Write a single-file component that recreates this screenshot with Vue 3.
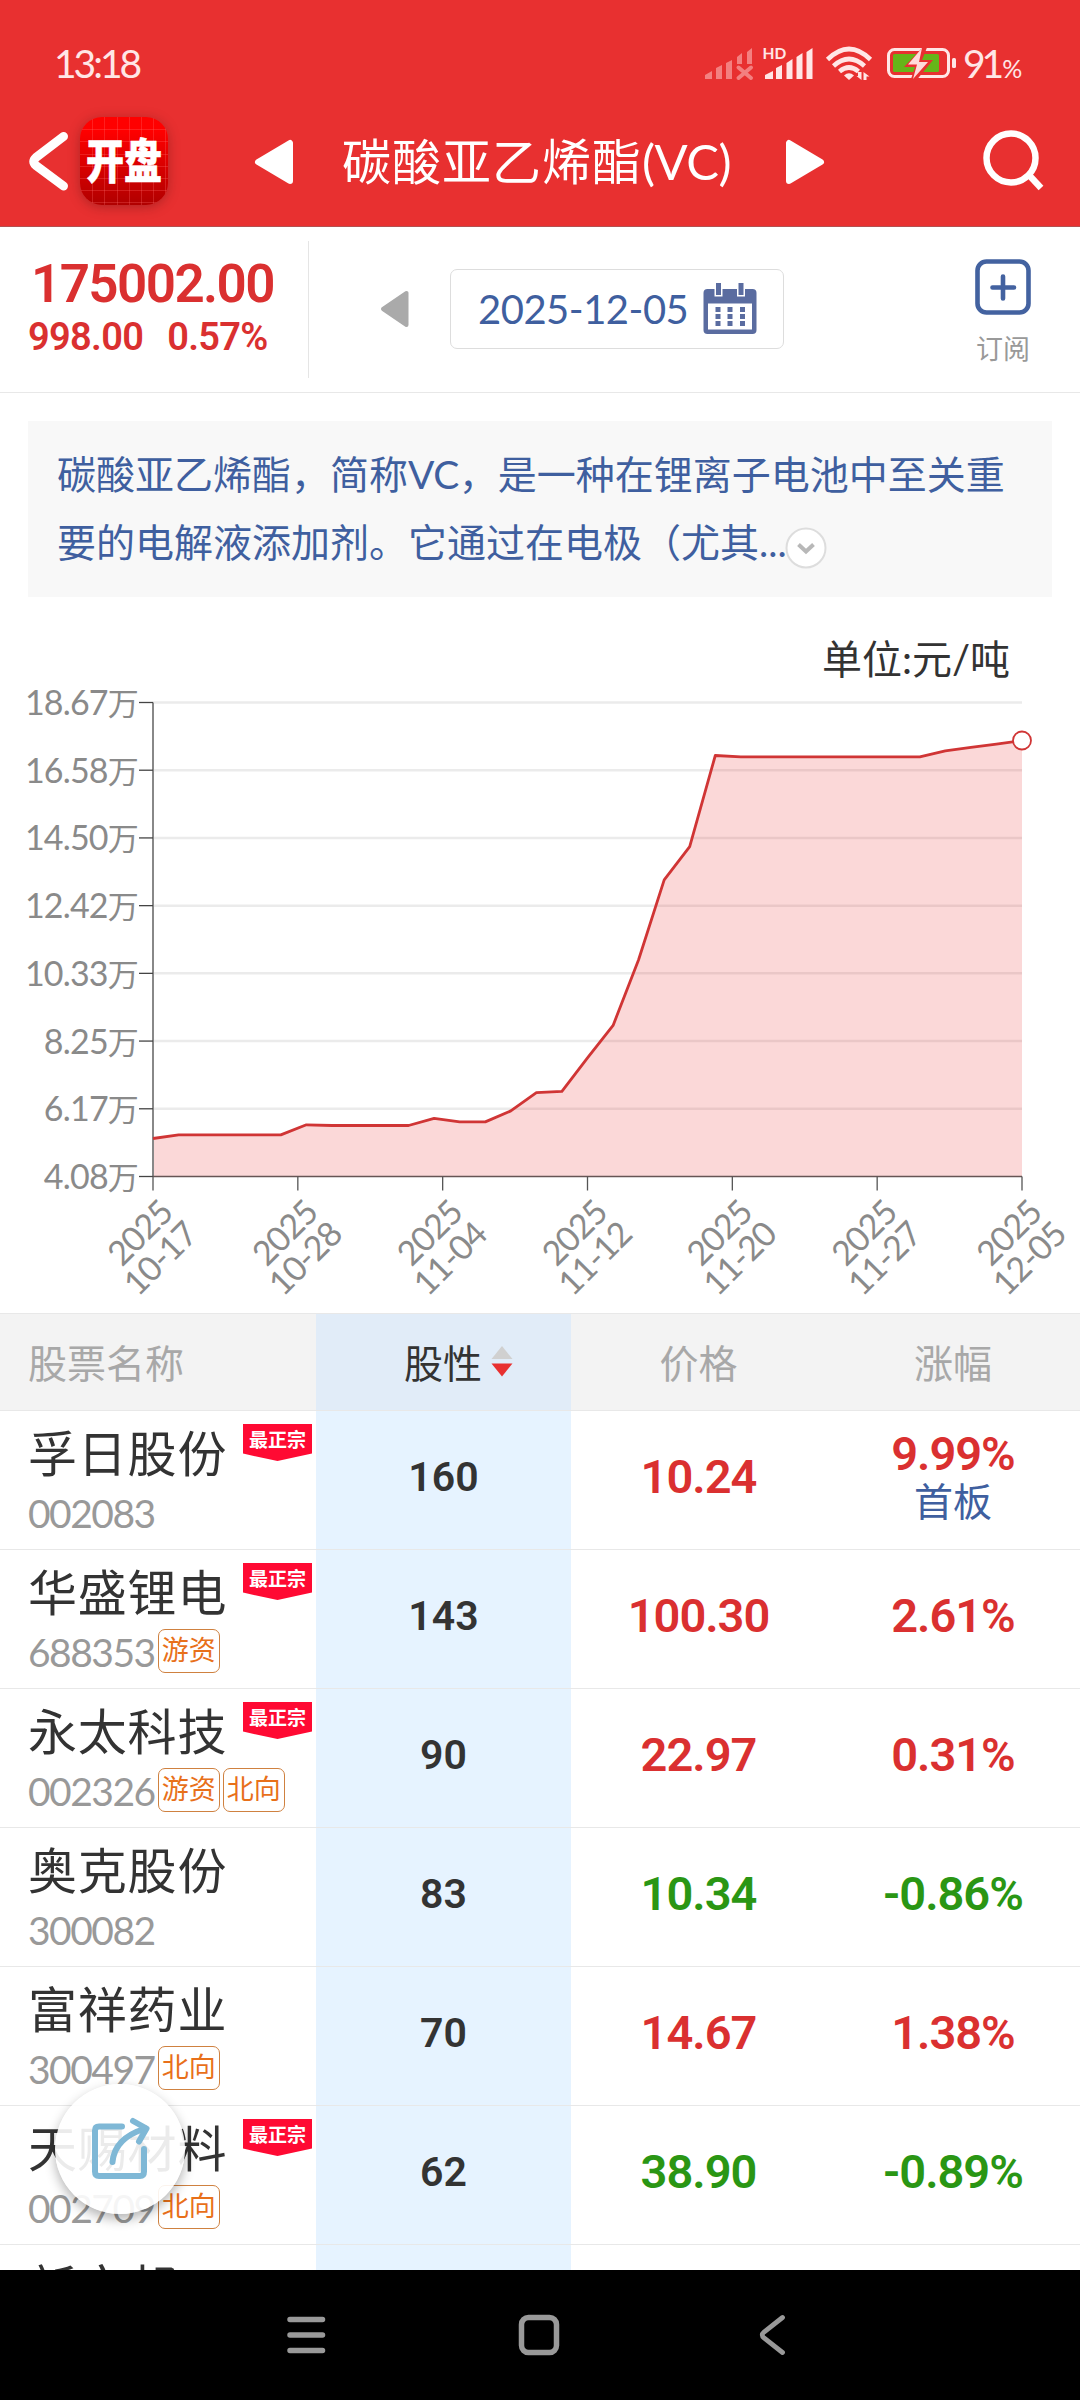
<script setup>
import { computed, ref } from 'vue'

const dates = ['10-17', '10-28', '11-04', '11-12', '11-20', '11-27', '12-05']
const yLabels = ['18.67', '16.58', '14.50', '12.42', '10.33', '8.25', '6.17', '4.08']

// Daily price, in units of 10k yuan per ton
const prices = [
  5.25, 5.36, 5.36, 5.36, 5.36, 5.36, 5.67, 5.65, 5.65, 5.65, 5.65, 5.87,
  5.76, 5.76, 6.10, 6.66, 6.70, 7.73, 8.73, 10.75, 13.21, 14.23, 17.04, 17,
  17, 17, 17, 17, 17, 17, 17, 17.18, 17.29, 17.39, 17.5
]

// Plot area inside the svg
const left = 153
const right = 1022
const top = 74.5
const bottom = 548.5
const min = 4.08
const max = 18.67

const yTick = (i) => top + ((bottom - top) / 7) * i
const xTick = (i) => left + ((right - left) / 6) * i

const linePoints = computed(() =>
  prices.map((p, i) => {
    const x = left + ((right - left) / (prices.length - 1)) * i
    const y = bottom - ((p - min) / (max - min)) * (bottom - top)
    return `${x.toFixed(1)},${y.toFixed(1)}`
  }).join(' ')
)
const areaPoints = computed(() => `${left},${bottom} ${linePoints.value} ${right},${bottom}`)
const lastY = computed(() => bottom - ((prices[prices.length - 1] - min) / (max - min)) * (bottom - top))

const stocks = ref([
  { name: '孚日股份', code: '002083', tags: [], best: true, score: 160, price: '10.24', change: '9.99%', note: '首板' },
  { name: '华盛锂电', code: '688353', tags: ['游资'], best: true, score: 143, price: '100.30', change: '2.61%' },
  { name: '永太科技', code: '002326', tags: ['游资', '北向'], best: true, score: 90, price: '22.97', change: '0.31%' },
  { name: '奥克股份', code: '300082', tags: [], score: 83, price: '10.34', change: '-0.86%' },
  { name: '富祥药业', code: '300497', tags: ['北向'], score: 70, price: '14.67', change: '1.38%' },
  { name: '天赐材料', code: '002709', tags: ['北向'], best: true, score: 62, price: '38.90', change: '-0.89%' },
  { name: '新宙邦', code: '', tags: [], score: '', price: '', change: '' }
])

const isDown = (s) => s.change.startsWith('-')
</script>

<template>
  <div class="page">
    <header class="header">
      <div class="status-bar">
        <span class="time">13:18</span>
        <div class="status-right">
          <svg class="status-icons" width="255" height="40" viewBox="703 44 255 40">
            <g fill="#f38080">
              <path d="M705 79v-4l7-4v8zM716 79V68l6-3v14zM726 79V63l6-3v19zM737 64v-7l5-4v11zM747 64V52l5-4v16z" />
              <path d="M738.500 67.500l12.500 10.500M751 67.500l-12.500 10.500" stroke="#f38080" stroke-width="4" stroke-linecap="round" />
            </g>
            <g fill="#ffe6e6">
              <path d="M765 79v-4l8-4v8zM776 79V68l6-3v14zM786.500 79V63l6-4v20zM796.500 79V57l6-4v26zM806.500 79V52l6-4v31z" />
              <text x="762.500" y="59" class="hd">HD</text>
              <path d="M849 80l-5-4.500q5-4.500 10 0z" />
              <rect x="952" y="58" width="4" height="10" rx="1.500" />
              <path d="M858 72h3.500v8l-5-4h1.500zM863.500 80v-8l6 4.500h-3v3.500z" />
            </g>
            <g fill="none" stroke="#ffe6e6" stroke-width="4.600">
              <path d="M827.500 59.500q21.500-21 43 0M833.500 66q15.500-14 31 0M839.500 71.500q9.500-8 19 0" />
            </g>
            <rect x="888.500" y="49.500" width="60" height="27" rx="6" fill="none" stroke="#ffe6e6" stroke-width="3" />
            <rect x="893" y="54" width="46" height="18" rx="1.500" fill="#66b519" />
            <path d="M925 45L904 67h11l-5 15h5l18-22h-11l6-15z" fill="#e83030" />
            <path d="M922 48l-14 16.500h9L913 79l15-17h-9z" fill="#ffdada" />
          </svg>
          <span class="battery">91<small>%</small></span>
        </div>
      </div>
      <div class="nav-bar">
        <svg class="nav-back" width="44" height="64" viewBox="26 129 44 64">
          <path d="M63.500 136.500L36 157.500q-4.500 4 0 8L63.500 186" fill="none" stroke="#fff" stroke-width="9" stroke-linecap="round" />
        </svg>
        <div class="logo"><span>开盘</span></div>
        <svg class="nav-prev" width="42" height="48" viewBox="0 0 42 48">
          <path d="M4 24L36 5v38z" fill="#fff" stroke="#fff" stroke-width="6" stroke-linejoin="round" />
        </svg>
        <h1 class="title">碳酸亚乙烯酯<span>(VC)</span></h1>
        <svg class="nav-next" width="42" height="48" viewBox="0 0 42 48">
          <path d="M38 24L6 5v38z" fill="#fff" stroke="#fff" stroke-width="6" stroke-linejoin="round" />
        </svg>
        <svg class="search" width="64" height="64" viewBox="982 129 64 64">
          <circle cx="1011" cy="158" r="24.500" fill="none" stroke="#fff" stroke-width="6.500" />
          <path d="M1029 175l12 13" stroke="#fff" stroke-width="6.500" />
        </svg>
      </div>
    </header>

    <section class="summary">
      <div class="quote">
        <div class="quote-price">175002.00</div>
        <div class="quote-change"><span>998.00</span><span>0.57%</span></div>
      </div>
      <div class="picker">
        <svg class="prev-day" width="30" height="38" viewBox="0 0 30 38">
          <path d="M3 19L26.500 3v32z" fill="#aaa" stroke="#aaa" stroke-width="4" stroke-linejoin="round" />
        </svg>
        <div class="date-box">
          <span class="date">2025-12-05</span>
          <svg width="54" height="52" viewBox="0 0 54 52">
            <rect x=".5" y="6" width="53" height="45" rx="4" fill="#5a6ca0" />
            <rect x="5" y="20.500" width="44" height="26" fill="#fff" />
            <path d="M11.500 0h8v13.500h-8zM34 0h8v13.500h-8z" fill="#fff" />
            <path d="M13 0h5v12h-5zM35.500 0h5v12h-5z" fill="#5a6ca0" />
            <path d="M15 24v20M27 24v20M39.500 24v20" stroke="#5a6ca0" stroke-width="5" stroke-dasharray="5 2" />
          </svg>
        </div>
      </div>
      <div class="subscribe">
        <svg width="56" height="56" viewBox="0 0 56 56" fill="none" stroke="#4362a0">
          <rect x="2.500" y="2.500" width="51" height="51" rx="9" stroke-width="4.600" />
          <path d="M28 17.500v22M17.500 28.500h21.500" stroke-width="4.600" stroke-linecap="round" />
        </svg>
        <span>订阅</span>
      </div>
    </section>

    <section class="intro">
      <div>碳酸亚乙烯酯，简称<span class="latin">VC</span>，是一种在锂离子电池中至关重</div>
      <div class="intro-line">要的电解液添加剂。它通过在电极（尤其<span class="dots">...</span>
        <svg class="more" width="42" height="42" viewBox="0 0 42 42" fill="none">
          <circle cx="21" cy="21" r="19.500" fill="#fff" stroke="#ddd" stroke-width="2" />
          <path d="M13.500 17.500l7.500 7 7.500-7" stroke="#b8b8b8" stroke-width="4" />
        </svg>
      </div>
    </section>

    <svg class="chart" width="1080" height="685" viewBox="0 0 1080 685">
      <text x="1010" y="46" class="unit">单位:元/吨</text>
      <line v-for="i in 7" :key="'g' + i" :x1="left" :x2="right" :y1="yTick(i - 1)" :y2="yTick(i - 1)" stroke="#ebebeb" stroke-width="2.500" />
      <polygon :points="areaPoints" fill="#e83030" fill-opacity=".19" />
      <line :x1="left" :x2="left" :y1="top" :y2="bottom" stroke="#888" stroke-width="2" />
      <line :x1="left" :x2="right" :y1="bottom" :y2="bottom" stroke="#655" stroke-width="1.500" />
      <polyline :points="linePoints" fill="none" stroke="#d03535" stroke-width="2.800" stroke-linejoin="round" />
      <circle :cx="right" :cy="lastY" r="9" fill="#fff" stroke="#d03535" stroke-width="1.800" />
      <g v-for="(label, i) in yLabels" :key="label">
        <line x1="139" :x2="left" :y1="yTick(i)" :y2="yTick(i)" stroke="#444" stroke-width="1.300" />
        <text x="138" :y="yTick(i) + 12.500" class="axis">{{ label }}<tspan class="wan">万</tspan></text>
      </g>
      <g v-for="(d, i) in dates" :key="d">
        <line :x1="xTick(i)" :x2="xTick(i)" :y1="bottom" :y2="bottom + 14" stroke="#555" stroke-width="1.300" />
        <g :transform="`translate(${xTick(i) + 13} 578) rotate(-45)`">
          <text x="0" y="12.500" class="axis date-label">2025</text>
          <text x="2" y="45" class="axis date-label">{{ d }}</text>
        </g>
      </g>
    </svg>

    <section class="table">
      <div class="row table-head">
        <div class="cell name-cell">股票名称</div>
        <div class="cell score-cell">
          股性
          <svg width="22" height="32" viewBox="0 0 22 32">
            <path d="M.5 14L11 1l10.500 13z" fill="#d0d0d0" />
            <path d="M.5 18.500L11 31.500l10.500-13z" fill="#e83030" />
          </svg>
        </div>
        <div class="cell">价格</div>
        <div class="cell">涨幅</div>
      </div>
      <div v-for="s in stocks" :key="s.name" class="row" :class="{ down: isDown(s) }">
        <div class="cell name-cell">
          <div class="name">{{ s.name }}</div>
          <div class="code-line">
            <span class="code">{{ s.code }}</span>
            <span v-for="t in s.tags" :key="t" class="tag">{{ t }}</span>
          </div>
          <span v-if="s.best" class="best">最正宗</span>
        </div>
        <div class="cell score-cell num">{{ s.score }}</div>
        <div class="cell num price">{{ s.price }}</div>
        <div class="cell num price change">
          <span>{{ s.change }}</span>
          <span v-if="s.note" class="note">{{ s.note }}</span>
        </div>
      </div>
    </section>

    <button class="share">
      <svg width="60" height="66" viewBox="90 2117 60 66" fill="none" stroke="#7fb8d6" stroke-width="6" stroke-linecap="round" stroke-linejoin="round">
        <path d="M122 2127.500H99q-4 0-4 4v41q0 4.500 4 4.500h41q4 0 4-4.500v-22.500" />
        <path d="M112.500 2163q2-24 33-33.500" />
        <path d="M133 2122l13.500 7.500-7.500 13" />
      </svg>
    </button>

    <footer class="system-nav">
      <svg width="1080" height="130" viewBox="0 2270 1080 130" fill="none" stroke="#999" stroke-width="5.500" stroke-linecap="round">
        <path d="M290 2319.500h32.500M290 2335h32.500M290 2350.500h32.500" />
        <rect x="521.500" y="2317.500" width="35" height="35" rx="7" />
        <path d="M782.500 2317.500L764 2332q-3.500 3 0 6l18.500 14.500" stroke-width="4.800" />
      </svg>
    </footer>
  </div>
</template>

<style>
body {
  margin: 0;
}
</style>

<style scoped>
.page {
  position: relative;
  display: flex;
  flex-direction: column;
  width: 1080px;
  height: 2400px;
  overflow: hidden;
  background: #fff;
  color: #333;
  font-family: "Lato", "Noto Sans CJK SC", sans-serif;
  font-weight: 400;
}

.header {
  height: 226px;
  flex-shrink: 0;
  background: #e83030;
  border-bottom: 1px solid #b35050;
}

.status-bar {
  display: flex;
  justify-content: space-between;
  height: 40px;
  padding: 44px 60px 0 54px;
  line-height: 38px;
  color: #ffe6e6;
}

.time {
  font-size: 39px;
  letter-spacing: -3px;
}

.status-right {
  display: flex;
}

.hd {
  font: 700 15.5px "Lato", sans-serif;
}

.battery {
  width: 62px;
  padding-left: 5px;
  box-sizing: border-box;
  font-size: 39px;
  letter-spacing: -4px;
  white-space: nowrap;
}

.battery small {
  margin-left: 2px;
  font-size: 25px;
}

.nav-bar {
  display: flex;
  align-items: center;
  height: 88px;
  padding: 0 34px 0 26px;
  margin-top: 33px;
}

.logo {
  display: flex;
  align-items: center;
  justify-content: center;
  width: 88px;
  height: 88px;
  margin-left: 10px;
  border-radius: 22px;
  background:
    repeating-linear-gradient(90deg, transparent 0 11.2px, rgba(255, 110, 110, .28) 11.2px 12.2px) 1px 0,
    repeating-linear-gradient(180deg, transparent 0 11.2px, rgba(255, 110, 110, .28) 11.2px 12.2px) 0 1px,
    linear-gradient(#f00 15%, #b00000);
  box-shadow: 0 2px 12px rgba(90, 20, 20, .4);
}

.logo span {
  margin-bottom: 6px;
  color: #fff;
  font: 900 47px/82px "Noto Sans CJK SC", sans-serif;
  -webkit-text-stroke: .6px #fff;
  white-space: nowrap;
  transform: scaleX(.81);
}

.nav-prev {
  margin: 2px 0 0 86px;
}

.title {
  width: 394px;
  margin: 0 0 0 46px;
  font-size: 49px;
  font-weight: 400;
  line-height: 86px;
  letter-spacing: 1px;
  white-space: nowrap;
  color: #fff;
}

.title span {
  letter-spacing: -.5px;
}

.nav-next {
  margin: 2px 0 0 47px;
}

.search {
  margin-left: auto;
}

.summary {
  display: flex;
  height: 165px;
  flex-shrink: 0;
  border-bottom: 1px solid #e8e8e8;
}

.quote {
  width: 309px;
  height: 137px;
  margin-top: 14px;
  padding-left: 31px;
  box-sizing: border-box;
  border-right: 1px solid #e5e5e5;
  font-family: "Roboto", sans-serif;
  font-weight: 600;
  color: #da3030;
}

.quote-price {
  padding-top: 15px;
  font-size: 53px;
  line-height: 56px;
  letter-spacing: -1.600px;
}

.quote-change {
  display: flex;
  gap: 24px;
  margin-top: 7px;
  font-size: 38px;
  line-height: 36px;
  letter-spacing: -.7px;
}

.quote-change span:first-child {
  margin-left: -3px;
}

.picker {
  display: flex;
  align-items: center;
  width: 477px;
  height: 164px;
}

.prev-day {
  margin-left: 71px;
}

.date-box {
  display: flex;
  align-items: center;
  width: 334px;
  height: 80px;
  margin-left: 40px;
  box-sizing: border-box;
  border: 1px solid #ddd;
  border-radius: 7px;
}

.date {
  width: 225px;
  margin-left: 27px;
  font-size: 40px;
  letter-spacing: -.5px;
  color: #3f5f9f;
  white-space: nowrap;
}

.subscribe {
  display: flex;
  flex-direction: column;
  align-items: center;
  margin: 32px 0 0 189px;
  color: #999;
  font-size: 27px;
  line-height: 36px;
}

.subscribe span {
  margin-top: 16px;
}

.intro {
  height: 176px;
  flex-shrink: 0;
  margin: 28px 28px 0;
  padding: 19px 0 0 29px;
  box-sizing: border-box;
  background: #f8f8f8;
  color: #3f5f9f;
  font-size: 39px;
  line-height: 68px;
  white-space: nowrap;
}

.intro-line {
  display: flex;
  align-items: center;
}

.latin {
  letter-spacing: -.5px;
}

.dots {
  width: 26px;
}

.more {
  margin-top: 12px;
}

.chart {
  flex-shrink: 0;
  display: block;
  margin-top: 31px;
}

.unit {
  font-size: 40px;
  font-family: "Lato", "Noto Sans CJK SC", sans-serif;
  text-anchor: end;
  fill: #333;
}

.axis {
  font-family: "Lato", "Noto Sans CJK SC", sans-serif;
  font-size: 34px;
  letter-spacing: -.8px;
  text-anchor: end;
  fill: #8a8a8a;
}

.date-label {
  letter-spacing: -1px;
}

.wan {
  font-size: 31px;
}

.table {
  height: 957px;
  flex-shrink: 0;
  overflow: hidden;
}

.row {
  display: grid;
  grid-template-columns: 316px 255px 255px 254px;
  height: 139px;
  box-sizing: border-box;
  border-bottom: 1px solid #e8e8e8;
}

.cell {
  position: relative;
  display: flex;
  align-items: center;
  justify-content: center;
}

.table-head {
  height: 98px;
  border-top: 1px solid #e8e8e8;
  background: #f3f3f3;
  color: #a8a8a8;
  font-size: 39px;
}

.table-head .cell {
  padding-bottom: 3px;
}

.table-head .score-cell {
  gap: 9px;
  padding-left: 30px;
  background: #e1ecf8;
  color: #333;
}

.name-cell {
  flex-direction: column;
  align-items: flex-start;
  padding-left: 28px;
}

.row:not(.table-head) .name-cell {
  justify-content: flex-start;
}

.name {
  margin-top: 11px;
  font-size: 49px;
  line-height: 62px;
  letter-spacing: .8px;
}

.code-line {
  display: flex;
  align-items: center;
  gap: 3px;
  height: 44px;
  margin-top: 6px;
}

.code {
  margin-top: 2px;
  font-size: 39px;
  line-height: 44px;
  letter-spacing: -1.500px;
  color: #999;
}

.tag {
  width: 62px;
  height: 44px;
  box-sizing: border-box;
  border: 1.500px solid #cf8140;
  border-radius: 7px;
  font-size: 27px;
  line-height: 39px;
  text-align: center;
  color: #e8701a;
}

/* Corner ribbon on top of the name cell */
.best {
  position: absolute;
  top: 13px;
  left: 243px;
  width: 69px;
  height: 37px;
  background: #ff0a33;
  clip-path: polygon(0 0, 100% 0, 100% 80%, 50% 100%, 0 80%);
  color: #fff;
  font-size: 19px;
  font-weight: 700;
  line-height: 31px;
  text-align: center;
}

.score-cell {
  background: #e6f3ff;
}

.num {
  padding-bottom: 7px;
  font-family: "Roboto", "Noto Sans CJK SC", sans-serif;
  font-size: 41px;
  font-weight: 600;
}

.price {
  font-size: 47px;
  letter-spacing: -1px;
  color: #da3030;
}

.down .price {
  color: #2a9614;
}

.change {
  flex-direction: column;
  line-height: 46px;
}

.note {
  margin: 3px 0 -3px;
  font-size: 39px;
  font-weight: 400;
  letter-spacing: 0;
  color: #3f5f9f;
}

/* Floating share button */
.share {
  position: absolute;
  top: 2084px;
  left: 55px;
  display: flex;
  align-items: center;
  justify-content: center;
  width: 130px;
  height: 130px;
  padding: 0;
  border: 0;
  border-radius: 50%;
  background: rgba(255, 255, 255, .9);
  box-shadow: 0 5px 12px rgba(0, 0, 0, .3);
}

.system-nav {
  height: 130px;
  flex-shrink: 0;
  background: #000;
}
</style>
